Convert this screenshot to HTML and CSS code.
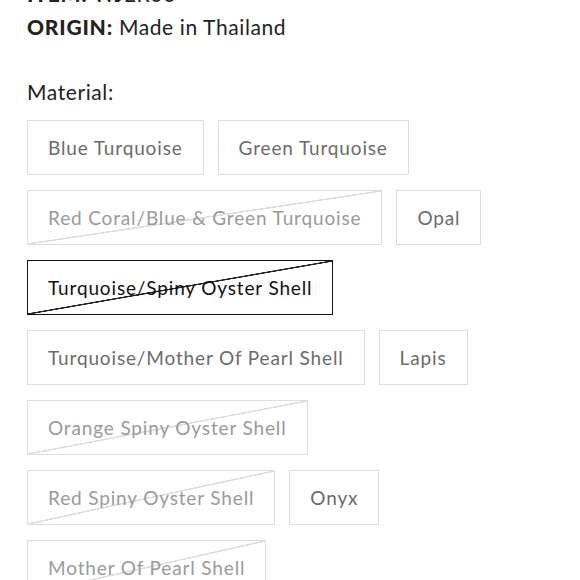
FILE: index.html
```html
<!DOCTYPE html>
<html lang="en">
<head>
<meta charset="utf-8">
<title>Material</title>
<link rel="stylesheet" href="styles.css">
</head>
<body>
<div class="page">
  <div class="info">
    <p class="info-line"><span class="label">ITEM:</span> WJER00</p>
    <p class="info-line"><span class="label">ORIGIN:</span> Made in Thailand</p>
  </div>
  <p class="option-title">Material:</p>
  <div class="swatches">
    <button class="swatch">Blue Turquoise</button>
    <button class="swatch">Green Turquoise</button>
    <button class="swatch swatch-soldout">Red Coral/Blue &amp; Green Turquoise</button>
    <button class="swatch">Opal</button>
    <button class="swatch swatch-soldout swatch-selected">Turquoise/Spiny Oyster Shell</button>
    <button class="swatch">Turquoise/Mother Of Pearl Shell</button>
    <button class="swatch">Lapis</button>
    <button class="swatch swatch-soldout">Orange Spiny Oyster Shell</button>
    <button class="swatch swatch-soldout">Red Spiny Oyster Shell</button>
    <button class="swatch">Onyx</button>
    <button class="swatch swatch-soldout">Mother Of Pearl Shell</button>
  </div>
</div>
</body>
</html>
```
FILE: styles.css
```css
* { box-sizing: border-box; }
html, body { margin: 0; padding: 0; background: #fff; }
body {
  font-family: "Lato", "Open Sans", sans-serif;
  color: #222;
  overflow: hidden;
}
.page {
  padding: 0 27px;
  margin-top: -23px;
}
.info-line {
  margin: 0;
  font-size: 21px;
  line-height: 33px;
  letter-spacing: 0.6px;
  color: #222;
}
.label {
  font-weight: 900;
  letter-spacing: 0.8px;
}
.option-title {
  margin: 34px 0 0;
  font-size: 21px;
  line-height: 30px;
  letter-spacing: 0.6px;
  color: #222;
}
.swatches {
  display: flex;
  flex-wrap: wrap;
  column-gap: 14px;
  row-gap: 15px;
  margin-top: 13px;
}
.swatch {
  height: 55px;
  padding: 0 20px;
  border: 1px solid #dedede;
  background: #fff;
  font-family: inherit;
  font-size: 19px;
  letter-spacing: 0.85px;
  color: #6b6b6b;
  display: flex;
  align-items: center;
}
.swatch-soldout {
  color: #9a9a9a;
  background: linear-gradient(to bottom right, transparent calc(50% - 1px), #dcdcdc calc(50% - 0.5px), #dcdcdc calc(50% + 0.5px), transparent calc(50% + 1px));
}
.swatch-selected {
  border: 1.5px solid #111;
  color: #111;
  background: linear-gradient(to bottom right, transparent calc(50% - 1px), #222 calc(50% - 0.5px), #222 calc(50% + 0.5px), transparent calc(50% + 1px));
}
```
